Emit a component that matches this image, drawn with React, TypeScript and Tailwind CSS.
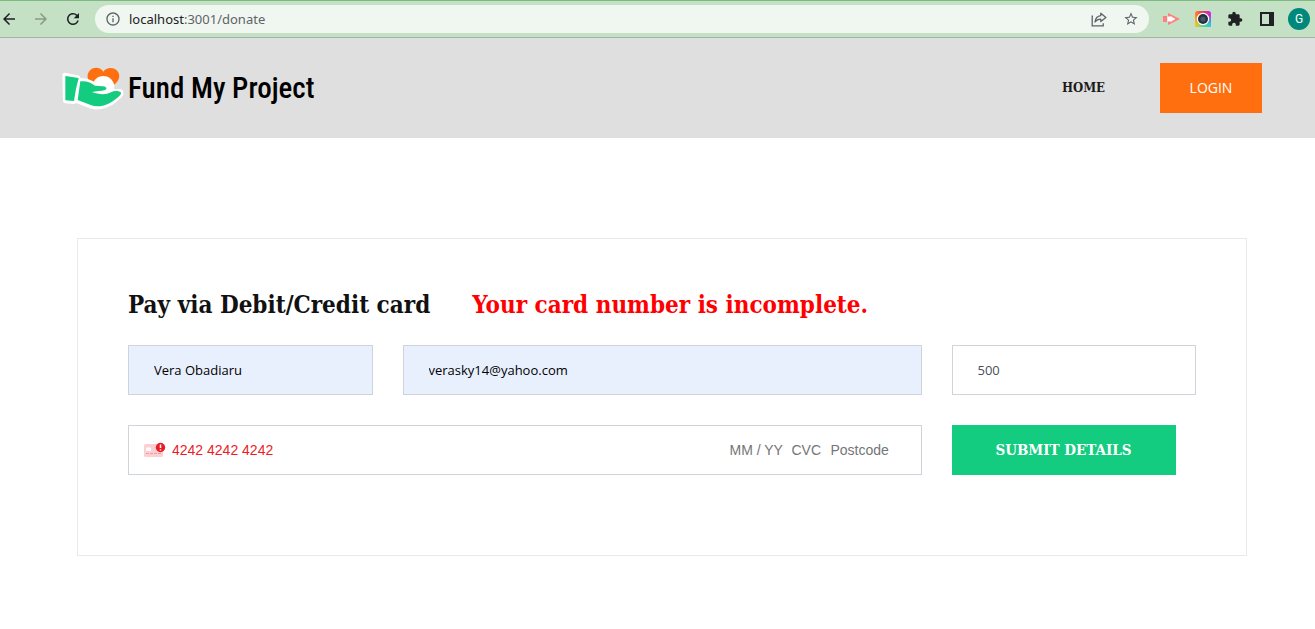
import React from "react";
import {
  MdArrowBack,
  MdArrowForward,
  MdExtension,
  MdInfoOutline,
  MdRefresh,
  MdStarBorder,
} from "react-icons/md";

function ShareIcon() {
  return (
    <svg viewBox="0 0 16 16" className="size-4" fill="none" stroke="#5f6368" strokeWidth="1.3">
      <path d="M2 5.200H1.200v9.600h11v-2.600" />
      <path d="M9.800 2.200 14.900 6.400 9.800 10.600V8.200C7.200 8.200 5.400 9 4 11 4.400 7.400 6.400 5 9.800 4.600Z" strokeLinejoin="round" />
    </svg>
  );
}

function RecorderIcon() {
  return (
    <svg viewBox="0 0 17 14" className="h-3.5 w-[17px]">
      <path d="M0 4h4v6H0Z" fill="#ff8080" />
      <path d="M5 1 17 7 5 13Z" fill="#ff8080" />
      <path d="M4.500 4.500h4.500V5l3.500 2L9 9v.5H4.500Z" fill="#fff" />
    </svg>
  );
}

function CameraIcon() {
  return (
    <svg viewBox="0 0 16 16" className="size-4">
      <defs>
        <linearGradient id="cam-top" x1="0" y1="0" x2="1" y2="0">
          <stop offset="0" stopColor="#ff8a1e" />
          <stop offset="0.5" stopColor="#f5325c" />
          <stop offset="1" stopColor="#c02ee8" />
        </linearGradient>
        <linearGradient id="cam-low" x1="0" y1="0" x2="1" y2="0">
          <stop offset="0" stopColor="#ffc61e" />
          <stop offset="0.5" stopColor="#58d68a" />
          <stop offset="1" stopColor="#22c7ee" />
        </linearGradient>
        <linearGradient id="cam-fade" x1="0" y1="0" x2="0" y2="1">
          <stop offset="0.25" stopColor="#000" />
          <stop offset="0.85" stopColor="#fff" />
        </linearGradient>
        <mask id="cam-mask">
          <rect width="16" height="16" fill="url(#cam-fade)" />
        </mask>
      </defs>
      <rect width="16" height="16" rx="2.5" fill="url(#cam-top)" />
      <rect width="16" height="16" rx="2.5" fill="url(#cam-low)" mask="url(#cam-mask)" />
      <circle cx="8" cy="8" r="6.2" fill="#fff" />
      <circle cx="8" cy="8" r="5" fill="#25303b" />
      <circle cx="8" cy="8" r="2.6" fill="#42576b" />
    </svg>
  );
}

function SidePanelIcon() {
  return (
    <svg viewBox="0 0 14 14" className="size-3.5">
      <path d="M0 0h14v14H0ZM2 2v10h7V2Z" fill="#202124" fillRule="evenodd" />
    </svg>
  );
}

function LogoMark() {
  return (
    <svg viewBox="36 36 186 129" className="h-[43px] w-[62px] shrink-0">
      <path
        d="M160 50C152 36 132 34 121 45C109 57 111 72 121 83L160 118L199 83C210 71 211 56 200 46C189 35 168 37 160 50Z"
        fill="#ff6f0f"
      />
      <circle cx="160" cy="96" r="33" fill="#fff" />
      <path
        d="M44 60L84 68L72 140L46 138ZM92 77C110 76 124 83 134 90L162 93C171 95 171 102 165 106L184 108L210 109C218 114 210 123 202 129C181 149 151 162 124 154L83 138Z"
        fill="#fff"
        stroke="#fff"
        strokeWidth="14"
        strokeLinejoin="round"
      />
      <path d="M46 63L86 69Q77 100 72 138L46 136Z" fill="#13cc80" />
      <path
        d="M91 79C111 77 124 84 135 92L159 94C169 95 173 102 165 105C154 109 139 108 126 111C147 119 167 120 183 112C192 107 207 107 213 113C215 116 207 124 201 129C180 147 151 160 124 151L83 135Z"
        fill="#13cc80"
      />
    </svg>
  );
}

function CardErrorIcon() {
  return (
    <svg viewBox="0 0 22 16" className="h-4 w-[22px] shrink-0">
      <rect x="0" y="2" width="19" height="13" rx="1.5" fill="#fbd0d3" />
      <rect x="2" y="5.5" width="5" height="3.5" rx="1" fill="#fff" />
      <path d="M2 11.500h15" stroke="#f29ba1" strokeDasharray="3 1" />
      <circle cx="16.500" cy="5.500" r="4.700" fill="#eb1c26" />
      <path d="M16.500 2.500v3.500M16.500 7.200v1.300" stroke="#fff" strokeWidth="1.5" />
    </svg>
  );
}

const toolbarButton = "flex h-8 w-8 items-center justify-center";

function BrowserBar() {
  return (
    <div className="flex h-[38px] items-center border-t border-b border-t-[#7cbb7c] border-b-[#a3b5a3] bg-[#c5e1c5]">
      <div className="flex w-[95px] shrink-0 items-center gap-3.5 text-[#202124]">
        <button type="button" aria-label="Back">
          <MdArrowBack className="size-[18px]" />
        </button>
        <button type="button" aria-label="Forward" className="text-[#869a87]">
          <MdArrowForward className="size-[18px]" />
        </button>
        <button type="button" aria-label="Reload">
          <MdRefresh className="size-[18px]" />
        </button>
      </div>
      <div className="flex h-7 flex-1 items-center rounded-full bg-[#f0f7f0] px-2.5 text-[#5f6368]">
        <MdInfoOutline className="size-4" />
        <p className="flex-1 pl-2 font-['Noto_Sans',sans-serif] text-[13px] leading-5">
          <span className="text-[#202124]">localhost</span>:3001/donate
        </p>
        <div className="flex items-center gap-4">
          <button type="button" aria-label="Share">
            <ShareIcon />
          </button>
          <button type="button" aria-label="Bookmark">
            <MdStarBorder className="size-4" />
          </button>
        </div>
      </div>
      <div className="flex items-center pl-1.5 text-[#202124]">
        <button type="button" aria-label="Screen recorder" className={toolbarButton}>
          <RecorderIcon />
        </button>
        <button type="button" aria-label="Screenshot" className={toolbarButton}>
          <CameraIcon />
        </button>
        <button type="button" aria-label="Extensions" className={toolbarButton}>
          <MdExtension className="size-4" />
        </button>
        <button type="button" aria-label="Side panel" className={toolbarButton}>
          <SidePanelIcon />
        </button>
        <button type="button" aria-label="Profile G" className={toolbarButton}>
          <span className="size-[22px] rounded-full bg-[#00897b] font-[Roboto,sans-serif] text-xs leading-[22px] text-white">
            G
          </span>
        </button>
      </div>
    </div>
  );
}

function SiteHeader() {
  return (
    <header className="flex h-[100px] items-center justify-between bg-[#dfdfdf] pr-[53px] pl-[62px]">
      <a href="#" className="flex items-center gap-1 text-black">
        <LogoMark />
        <span className="font-['Roboto_Condensed',Roboto,sans-serif] text-[29px] leading-10 font-medium">
          Fund My Project
        </span>
      </a>
      <nav className="flex items-center gap-[55px]">
        <a
          href="#"
          className="font-['Roboto_Slab','DejaVu_Serif_Condensed','DejaVu_Serif',serif] text-[13px] font-semibold text-[#1a1a1a]"
        >
          HOME
        </a>
        <button
          type="button"
          className="h-[50px] w-[102px] bg-[#ff6f0f] font-['Open_Sans',sans-serif] text-sm font-medium text-white"
        >
          LOGIN
        </button>
      </nav>
    </header>
  );
}

const field =
  "h-[50px] w-full min-w-0 border border-[#ced4da] px-[25px] font-['Open_Sans',sans-serif] text-[13px] outline-none";

const cardField = "min-w-0 bg-transparent outline-none placeholder:text-[#757575]";

function DonateForm() {
  return (
    <form
      className="border border-[#e9e9e9] px-[50px] pt-[50px] pb-20"
      onSubmit={(event) => event.preventDefault()}
    >
      <h2 className="mb-6 flex flex-wrap gap-x-[42px] font-['Roboto_Slab','DejaVu_Serif_Condensed','DejaVu_Serif',serif] text-2xl leading-8 font-bold text-[#111]">
        <span>Pay via Debit/Credit card</span>
        <span role="alert" className="text-[#ff0000]">
          Your card number is incomplete.
        </span>
      </h2>
      <div className="grid grid-cols-4 gap-[30px]">
        <input aria-label="Full name" defaultValue="Vera Obadiaru" className={`${field} bg-[#e8f0fe] text-black`} />
        <input
          aria-label="Email"
          type="email"
          defaultValue="verasky14@yahoo.com"
          className={`${field} col-span-2 bg-[#e8f0fe] text-black`}
        />
        <input aria-label="Amount" defaultValue="500" className={`${field} bg-white text-[#495057]`} />
        <div className="col-span-3 flex h-[50px] items-center border border-[#ced4da] pr-[31px] pl-[15px] font-['Liberation_Sans',sans-serif] text-sm">
          <CardErrorIcon />
          <input
            aria-label="Card number"
            defaultValue="4242 4242 4242"
            className={`${cardField} ml-1.5 flex-1 text-[#eb1c26]`}
          />
          <div className="flex gap-2">
            <input aria-label="Expiry" placeholder="MM / YY" className={`${cardField} w-[54px]`} />
            <input aria-label="CVC" placeholder="CVC" className={`${cardField} w-[31px]`} />
            <input aria-label="Postcode" placeholder="Postcode" className={`${cardField} w-[59px]`} />
          </div>
        </div>
        <button
          type="submit"
          className="h-[50px] w-[224px] max-w-full bg-[#13cc80] font-['Roboto_Slab','DejaVu_Serif_Condensed','DejaVu_Serif',serif] text-[15px] font-bold text-white"
        >
          SUBMIT DETAILS
        </button>
      </div>
    </form>
  );
}

export default function App() {
  return (
    <div className="min-h-screen bg-white">
      <BrowserBar />
      <SiteHeader />
      <main className="pt-[100px] pr-[68px] pb-[73px] pl-[77px]">
        <DonateForm />
      </main>
    </div>
  );
}
